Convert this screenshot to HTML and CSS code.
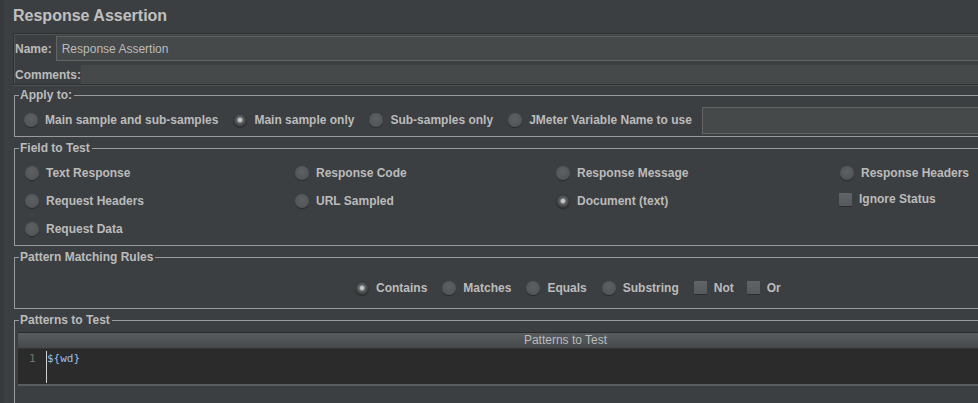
FILE: index.html
```html
<!DOCTYPE html>
<html>
<head>
<meta charset="utf-8">
<title>Response Assertion</title>
<link rel="stylesheet" href="styles.css">
</head>
<body>
<div class="page">
  <h1 class="title">Response Assertion</h1>

  <div class="meta">
    <div class="meta-row name-row">
      <span class="lbl name-lbl">Name:</span>
      <div class="field name-field">Response Assertion</div>
    </div>
    <div class="meta-row comments-row">
      <span class="lbl">Comments:</span>
      <div class="comments-field"></div>
    </div>
  </div>

  <fieldset class="group apply">
    <legend>Apply to:</legend>
    <div class="apply-row">
      <span class="opt"><span class="radio"></span>Main sample and sub-samples</span>
      <span class="opt"><span class="radio on"></span>Main sample only</span>
      <span class="opt"><span class="radio"></span>Sub-samples only</span>
      <span class="opt last"><span class="radio"></span>JMeter Variable Name to use</span>
      <div class="var-field"></div>
    </div>
  </fieldset>

  <fieldset class="group">
    <legend>Field to Test</legend>
    <div class="field-grid">
      <span class="opt"><span class="radio"></span>Text Response</span>
      <span class="opt"><span class="radio"></span>Response Code</span>
      <span class="opt"><span class="radio"></span>Response Message</span>
      <span class="opt"><span class="radio"></span>Response Headers</span>
      <span class="opt"><span class="radio"></span>Request Headers</span>
      <span class="opt"><span class="radio"></span>URL Sampled</span>
      <span class="opt"><span class="radio on"></span>Document (text)</span>
      <span class="opt chk-cell"><span class="chk"></span>Ignore Status</span>
      <span class="opt"><span class="radio"></span>Request Data</span>
    </div>
  </fieldset>

  <fieldset class="group">
    <legend>Pattern Matching Rules</legend>
    <div class="rules-row">
      <span class="opt"><span class="radio on"></span>Contains</span>
      <span class="opt"><span class="radio"></span>Matches</span>
      <span class="opt"><span class="radio"></span>Equals</span>
      <span class="opt"><span class="radio"></span>Substring</span>
      <span class="opt chk-opt first-chk"><span class="chk"></span>Not</span>
      <span class="opt chk-opt"><span class="chk"></span>Or</span>
    </div>
  </fieldset>

  <fieldset class="group patterns">
    <legend>Patterns to Test</legend>
    <div class="table">
      <div class="thead">Patterns to Test</div>
      <div class="editor">
        <div class="gutter">1</div>
        <div class="code">${wd}</div>
      </div>
    </div>
  </fieldset>
</div>
</body>
</html>
```

FILE: styles.css
```css
html, body {
  margin: 0;
  padding: 0;
  width: 978px;
  height: 403px;
  overflow: hidden;
  background: #3c3f41;
}

body {
  font-family: "Liberation Sans", Arial, sans-serif;
  font-size: 12px;
  color: #bbbbbb;
}

.page {
  width: 1114px;
  height: 403px;
  box-sizing: border-box;
  padding: 6px 0 0 13px;
  box-shadow: inset 4px 0 0 #37393b;
}

.title {
  margin: 0 0 7px;
  font-size: 16px;
  line-height: 20px;
  font-weight: bold;
  color: #c0c0c0;
}

/* Name / Comments panel */
.meta {
  border: 1px solid #2d2f30;
  box-shadow: inset 1px 1px 0 #505354, 0 1px 0 #505354;
  padding: 2px 0 0 1px;
}

.meta-row {
  display: flex;
  align-items: center;
}

.lbl {
  font-weight: bold;
  white-space: nowrap;
}

.name-row {
  height: 25px;
}

.name-lbl {
  margin-right: 4px;
}

.name-field {
  flex: 1;
  height: 25px;
  box-sizing: border-box;
  border: 1px solid #646464;
  background: #45494a;
  padding-left: 5px;
  display: flex;
  align-items: center;
}

.comments-row {
  height: 19px;
  margin-top: 4px;
}

.comments-field {
  flex: 1;
  height: 19px;
  background: #45494a;
}

/* Titled groups */
.group {
  margin: 4px 0 0 1px;
  padding: 0;
  border: 1px solid #9a9a9a;
  min-width: 0;
}

.group legend {
  margin-left: 4px;
  padding: 0 2px 0 1px;
  font-size: 12px;
  line-height: 14px;
  font-weight: bold;
  color: #bbbbbb;
}

.apply {
  margin-top: 3px;
}

.opt {
  display: flex;
  align-items: center;
  font-weight: bold;
  white-space: nowrap;
}

.radio {
  flex: none;
  width: 14px;
  height: 14px;
  border-radius: 50%;
  margin-right: 7px;
  background: radial-gradient(circle at 50% 40%, #5e6163 0, #515456 75%, #46494b 100%);
  box-shadow: 0 1px 1px rgba(0, 0, 0, 0.35);
}

.radio.on {
  background: radial-gradient(circle at 50% 50%, #c4c4c4 0, #c4c4c4 1.6px, #8c8c8c 2.4px, #595c5e 3.4px, #505355 4.8px, #3b3d3f 5.8px, #333537 7px);
}

.chk {
  flex: none;
  width: 13px;
  height: 13px;
  margin-right: 7px;
  border-radius: 1px;
  background: linear-gradient(#616466, #56595b);
  box-shadow: 0 1px 0 #2b2d2e;
}

.apply-row {
  display: flex;
  align-items: center;
  height: 27px;
  padding: 5px 0 2px 9px;
}

.apply-row .opt {
  margin-top: -2px;
}

.apply-row .opt + .opt {
  margin-left: 15px;
}

.apply-row .last {
  margin-right: 10px;
}

.var-field {
  flex: 1;
  height: 27px;
  box-sizing: border-box;
  border: 1px solid #646464;
  background: #45494a;
}

.field-grid {
  display: grid;
  grid-template-columns: 270px 261px 284px auto;
  grid-auto-rows: 28px;
  align-items: center;
  padding: 4px 0 2px 10px;
}

.chk-cell {
  margin-left: -1px;
  margin-bottom: 4px;
}

.rules-row {
  display: flex;
  align-items: center;
  height: 24px;
  padding: 12px 0 8px 340px;
}

.rules-row .opt {
  margin-top: -1px;
}

.rules-row .opt + .opt {
  margin-left: 15px;
}

.rules-row .opt.chk-opt {
  margin-left: 13px;
}

.rules-row .opt.first-chk {
  margin-left: 15px;
}

/* Patterns table */
.patterns {
  height: 140px;
}

.table {
  margin: 5px 0 0 3px;
}

.thead {
  height: 17px;
  box-sizing: border-box;
  border-top: 1px solid #2b2b2b;
  border-bottom: 1px solid #333537;
  background: linear-gradient(#585c5f, #46494b);
  text-align: center;
  line-height: 15px;
  color: #bbbbbb;
}

.editor {
  display: flex;
  height: 35px;
  background: #2b2b2b;
  border-bottom: 2px solid #5b5e60;
  font-family: "DejaVu Sans Mono", "Liberation Mono", monospace;
  font-size: 11px;
  line-height: 16px;
}

.gutter {
  width: 17px;
  padding: 2px 0 0 11px;
  color: #6a7474;
}

.code {
  margin: 2px 0 1px;
  padding-top: 1px;
  border-left: 1px solid #d0d0d0;
  color: #9fbbe6;
  height: 31px;
  line-height: 14px;
}
```
